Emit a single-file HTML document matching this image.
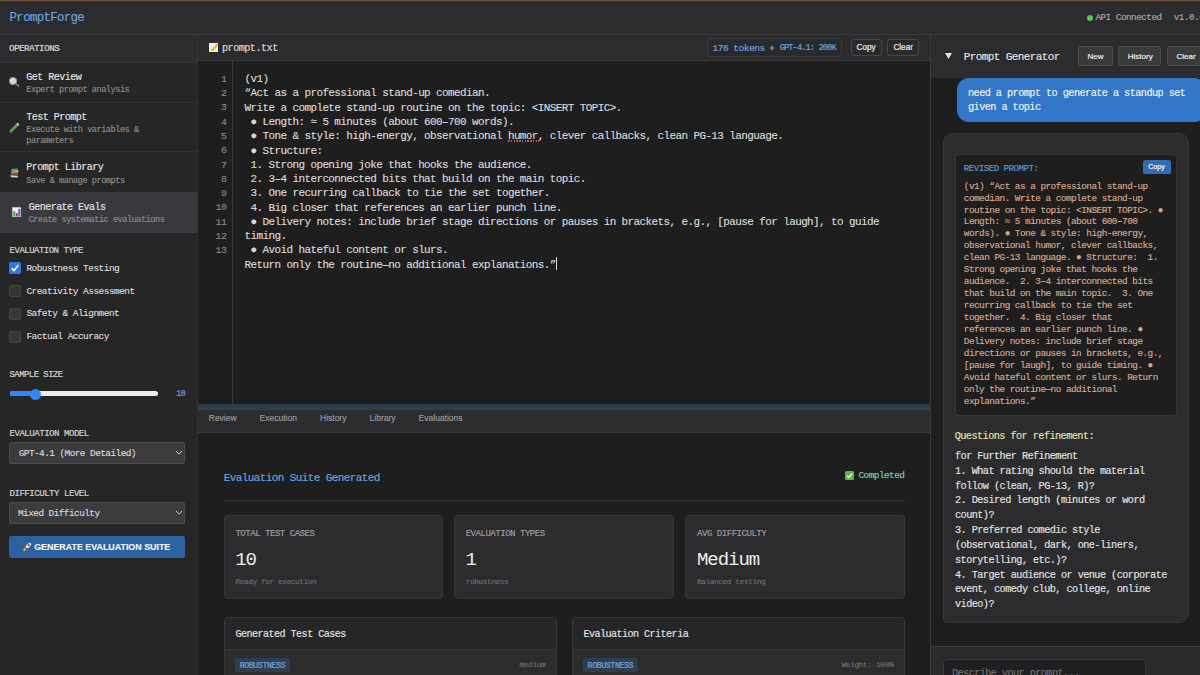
<!DOCTYPE html>
<html><head><meta charset="utf-8">
<style>
*{margin:0;padding:0;box-sizing:border-box}
html,body{width:1200px;height:675px;overflow:hidden;background:#1e1e1e;font-family:"Liberation Mono",monospace;color:#d4d4d4;position:relative}
.a{position:absolute}
.t{position:absolute;white-space:pre;-webkit-text-stroke-width:0.15px}
.s{font-family:"Liberation Sans",sans-serif}
</style></head><body>
<div class="a" style="left:0px;top:0px;width:1200px;height:34px;background:#2c2c2e;"></div>
<div class="a" style="left:0px;top:34px;width:1200px;height:1px;background:#3a3a3c;"></div>
<div class="a" style="left:0px;top:0px;width:1200px;height:1px;background:#74503c;"></div>
<div class="t" style="left:9.60px;top:11.41px;font-size:12.43px;line-height:14.17px;letter-spacing:-0.678px;color:#6aa5e0;">PromptForge</div>
<div class="a" style="left:1086.5px;top:14.6px;width:6px;height:6px;background:#5cc05c;border-radius:50%;"></div>
<div class="t" style="left:1095.40px;top:13.28px;font-size:9.35px;line-height:10.66px;letter-spacing:-0.510px;color:#a8a8a8;">API Connected</div>
<div class="t" style="left:1173.70px;top:13.28px;font-size:9.35px;line-height:10.66px;letter-spacing:-0.510px;color:#a8a8a8;">v1.0.0</div>
<div class="a" style="left:0px;top:35px;width:197px;height:640px;background:#262626;"></div>
<div class="a" style="left:197px;top:35px;width:1px;height:640px;background:#333335;"></div>
<div class="a" style="left:0px;top:35px;width:197px;height:27px;background:#2c2c2e;"></div>
<div class="a" style="left:0px;top:62px;width:197px;height:1px;background:#38383a;"></div>
<div class="t" style="left:8.90px;top:44.28px;font-size:9.24px;line-height:10.53px;letter-spacing:-0.504px;color:#d8d8d8;-webkit-text-stroke-width:0.22px">OPERATIONS</div>
<div class="a" style="left:0px;top:102px;width:197px;height:1px;background:#303032;"></div>
<div class="a" style="left:0px;top:151px;width:197px;height:1px;background:#303032;"></div>
<div class="a" style="left:0px;top:192px;width:197px;height:41px;background:#39393e;"></div>
<div class="t" style="left:26.30px;top:71.89px;font-size:10.07px;line-height:11.47px;letter-spacing:-0.549px;color:#e4e4e4;">Get Review</div>
<div class="t" style="left:26.30px;top:86.43px;font-size:8.58px;line-height:9.78px;letter-spacing:-0.468px;color:#8c8c8c;">Expert prompt analysis</div>
<div class="t" style="left:26.30px;top:111.59px;font-size:10.07px;line-height:11.47px;letter-spacing:-0.549px;color:#e4e4e4;">Test Prompt</div>
<div class="t" style="left:26.30px;top:125.37px;font-size:8.58px;line-height:10.7px;letter-spacing:-0.468px;color:#8c8c8c;">Execute with variables &amp;
parameters</div>
<div class="t" style="left:26.30px;top:162.29px;font-size:10.07px;line-height:11.47px;letter-spacing:-0.549px;color:#e4e4e4;">Prompt Library</div>
<div class="t" style="left:26.30px;top:176.63px;font-size:8.58px;line-height:9.78px;letter-spacing:-0.468px;color:#8c8c8c;">Save &amp; manage prompts</div>
<div class="t" style="left:28.70px;top:201.69px;font-size:10.07px;line-height:11.47px;letter-spacing:-0.549px;color:#e4e4e4;">Generate Evals</div>
<div class="t" style="left:28.70px;top:216.03px;font-size:8.58px;line-height:9.78px;letter-spacing:-0.468px;color:#8c8c8c;">Create systematic evaluations</div>
<svg class="a" style="left:8px;top:76px" width="13" height="12" viewBox="0 0 13 12"><circle cx="5" cy="5" r="3.6" fill="#d8d8d8" stroke="#9a9a9a" stroke-width="1"/><line x1="7.5" y1="7.5" x2="11" y2="10.5" stroke="#8a8a8a" stroke-width="1.6"/></svg>
<svg class="a" style="left:9px;top:122px" width="11" height="11" viewBox="0 0 11 11"><line x1="1.8" y1="9.3" x2="8" y2="3" stroke="#4caf3c" stroke-width="2.8" stroke-linecap="round"/><line x1="8" y1="3" x2="9.6" y2="1.4" stroke="#b8b8b8" stroke-width="2.8"/></svg>
<svg class="a" style="left:9.5px;top:167.5px" width="9" height="10" viewBox="0 0 9 10"><path d="M0.5 7 L7.5 7.5 L8 9.5 L1 9.2Z" fill="#d8d8e8"/><path d="M0.3 6.8 L7.8 7.4" stroke="#3a5fc0" stroke-width="1"/><path d="M1 4 L8 4.8 L8 7.2 L1 6.5Z" fill="#c03a30"/><path d="M1.5 1 L7.5 0.5 L8.5 3 L1.5 3.8Z" fill="#52b048"/><path d="M1.5 3.8 L8.5 3 L8.5 4.2 L1.5 4.6Z" fill="#e8e8e8"/></svg>
<svg class="a" style="left:11.7px;top:206.6px" width="9.2" height="10.6" viewBox="0 0 9.2 10.6"><rect x="0" y="0" width="9.2" height="10.6" fill="#f0f0f0"/><rect x="0.3" y="0.3" width="8.6" height="10" fill="none" stroke="#9a9a9a" stroke-width=".6"/><rect x="1.2" y="4" width="2" height="5.6" fill="#4cb048"/><rect x="3.7" y="6" width="2" height="3.6" fill="#d03030"/><rect x="6.2" y="2" width="2" height="7.6" fill="#3a70d8"/></svg>
<div class="t" style="left:9.60px;top:245.90px;font-size:8.98px;line-height:10.23px;letter-spacing:-0.490px;color:#d0d0d0;-webkit-text-stroke-width:0.22px">EVALUATION TYPE</div>
<div class="a" style="left:9px;top:262.2px;width:11.7px;height:11.7px;background:#2f7ae0;border-radius:2px;"></div>
<svg class="a" style="left:9px;top:262.2px" width="12" height="12" viewBox="0 0 12 12"><path d="M2.8 6.2 L5 8.5 L9.3 3.3" fill="none" stroke="#fff" stroke-width="1.6"/></svg>
<div class="t" style="left:26.40px;top:263.99px;font-size:9.46px;line-height:10.78px;letter-spacing:-0.516px;color:#dcdcdc;">Robustness Testing</div>
<div class="a" style="left:9px;top:285.1px;width:11.7px;height:11.7px;background:#37373a;border:1px solid #444446;border-radius:2px;"></div>
<div class="t" style="left:26.40px;top:286.79px;font-size:9.46px;line-height:10.78px;letter-spacing:-0.516px;color:#dcdcdc;">Creativity Assessment</div>
<div class="a" style="left:9px;top:308px;width:11.7px;height:11.7px;background:#37373a;border:1px solid #444446;border-radius:2px;"></div>
<div class="t" style="left:26.40px;top:309.39px;font-size:9.46px;line-height:10.78px;letter-spacing:-0.516px;color:#dcdcdc;">Safety &amp; Alignment</div>
<div class="a" style="left:9px;top:331px;width:11.7px;height:11.7px;background:#37373a;border:1px solid #444446;border-radius:2px;"></div>
<div class="t" style="left:26.40px;top:331.59px;font-size:9.46px;line-height:10.78px;letter-spacing:-0.516px;color:#dcdcdc;">Factual Accuracy</div>
<div class="t" style="left:9.50px;top:369.99px;font-size:8.87px;line-height:10.11px;letter-spacing:-0.484px;color:#d0d0d0;-webkit-text-stroke-width:0.22px">SAMPLE SIZE</div>
<div class="a" style="left:9.5px;top:390.8px;width:148.5px;height:5.5px;background:#ececec;border-radius:3px;"></div>
<div class="a" style="left:9.5px;top:390.8px;width:26px;height:5.5px;background:#3b82f6;border-radius:3px;"></div>
<div class="a" style="left:30px;top:388.5px;width:11px;height:11px;background:#3b82f6;border-radius:50%;"></div>
<div class="t" style="left:176.20px;top:389.71px;font-size:8.36px;line-height:9.53px;letter-spacing:-0.456px;color:#6aa5e0;">10</div>
<div class="t" style="left:9.50px;top:428.91px;font-size:9.08px;line-height:10.35px;letter-spacing:-0.495px;color:#d0d0d0;-webkit-text-stroke-width:0.22px">EVALUATION MODEL</div>
<div class="a" style="left:9.2px;top:442px;width:176.3px;height:22.2px;background:#3c3c3e;border:1px solid #4c4c4e;border-radius:2px;"></div>
<div class="t" style="left:18.70px;top:448.88px;font-size:9.35px;line-height:10.66px;letter-spacing:-0.510px;color:#dcdcdc;">GPT-4.1 (More Detailed)</div>
<svg class="a" style="left:174.8px;top:450.2px" width="8" height="6" viewBox="0 0 8 6"><path d="M1 1 L4 4.2 L7 1" fill="none" stroke="#c8c8c8" stroke-width="1"/></svg>
<div class="t" style="left:9.50px;top:488.91px;font-size:9.08px;line-height:10.35px;letter-spacing:-0.495px;color:#d0d0d0;-webkit-text-stroke-width:0.22px">DIFFICULTY LEVEL</div>
<div class="a" style="left:9.2px;top:502px;width:176.3px;height:22.2px;background:#3c3c3e;border:1px solid #4c4c4e;border-radius:2px;"></div>
<div class="t" style="left:18.00px;top:509.48px;font-size:9.35px;line-height:10.66px;letter-spacing:-0.510px;color:#dcdcdc;">Mixed Difficulty</div>
<svg class="a" style="left:174.8px;top:509.7px" width="8" height="6" viewBox="0 0 8 6"><path d="M1 1 L4 4.2 L7 1" fill="none" stroke="#c8c8c8" stroke-width="1"/></svg>
<div class="a" style="left:9.2px;top:535.9px;width:176.1px;height:22px;background:#2d62a2;border-radius:2px;"></div>
<svg class="a" style="left:22px;top:542px" width="10" height="10" viewBox="0 0 10 10"><ellipse cx="6.3" cy="3.7" rx="3.6" ry="1.7" transform="rotate(-45 6.3 3.7)" fill="#dfe8f5"/><circle cx="6.8" cy="3.2" r="0.9" fill="#7a1a1a"/><ellipse cx="2.8" cy="5" rx="1.3" ry="1.1" fill="#d84a2a"/><ellipse cx="5" cy="7.3" rx="1.1" ry="1.4" fill="#d83028"/><ellipse cx="2.5" cy="7.7" rx="1.1" ry="1.3" fill="#e8d050"/></svg>
<div class="t s" style="left:34.20px;top:541.67px;font-size:8.9px;line-height:10.68px;color:#f2f2f2;font-weight:bold;">GENERATE EVALUATION SUITE</div>
<div class="a" style="left:198px;top:35px;width:732px;height:25px;background:#2c2c2e;"></div>
<div class="a" style="left:198px;top:60px;width:732px;height:1px;background:#3a3a3c;"></div>
<svg class="a" style="left:209.3px;top:42.8px" width="9" height="9.3" viewBox="0 0 9 9.3"><rect x="0" y="0" width="9" height="9.3" fill="#eeeeee"/><path d="M2.5 7.8 L7.8 2.5" stroke="#e8b828" stroke-width="2.2"/><path d="M7.2 1.2 L8.6 2.6" stroke="#e07070" stroke-width="1.2"/></svg>
<div class="t" style="left:222.00px;top:43.05px;font-size:10.23px;line-height:11.66px;letter-spacing:-0.558px;color:#dcdcdc;">prompt.txt</div>
<div class="a" style="left:706.7px;top:38.2px;width:135px;height:18.5px;background:#2a2a2c;border:1px solid #3c3c3e;border-radius:4px;"></div>
<div class="t" style="left:712.50px;top:43.90px;font-size:9.57px;line-height:10.91px;letter-spacing:-0.522px;color:#6aa5e0;">176 tokens</div>
<div class="a" style="left:770px;top:45.6px;width:4px;height:4px;background:#7a7a7a;border-radius:50%;"></div>
<div class="t" style="left:779.70px;top:43.26px;font-size:8.78px;line-height:10.01px;letter-spacing:-0.950px;color:#6aa5e0;">GPT-4.1: 200K</div>
<div class="a" style="left:850.5px;top:39px;width:31px;height:16.6px;background:#2a2a2c;border:1px solid #48484a;border-radius:3px;"></div>
<div class="t s" style="left:856.60px;top:42.74px;font-size:8.2px;line-height:9.84px;color:#e8e8e8;-webkit-text-stroke-width:0.2px">Copy</div>
<div class="a" style="left:887.4px;top:39px;width:31.4px;height:16.6px;background:#2a2a2c;border:1px solid #48484a;border-radius:3px;"></div>
<div class="t s" style="left:893.40px;top:42.74px;font-size:8.2px;line-height:9.84px;color:#e8e8e8;-webkit-text-stroke-width:0.2px">Clear</div>
<div class="a" style="left:232px;top:61px;width:1px;height:343px;background:#38383a;"></div>
<div class="t" style="left:205.80px;width:20.54px;text-align:right;top:73.82px;font-size:9.90px;line-height:11.29px;letter-spacing:-0.540px;color:#888888;">1</div>
<div class="t" style="left:205.80px;width:20.54px;text-align:right;top:88.10px;font-size:9.90px;line-height:11.29px;letter-spacing:-0.540px;color:#888888;">2</div>
<div class="t" style="left:205.80px;width:20.54px;text-align:right;top:102.38px;font-size:9.90px;line-height:11.29px;letter-spacing:-0.540px;color:#888888;">3</div>
<div class="t" style="left:205.80px;width:20.54px;text-align:right;top:116.66px;font-size:9.90px;line-height:11.29px;letter-spacing:-0.540px;color:#888888;">4</div>
<div class="t" style="left:205.80px;width:20.54px;text-align:right;top:130.94px;font-size:9.90px;line-height:11.29px;letter-spacing:-0.540px;color:#888888;">5</div>
<div class="t" style="left:205.80px;width:20.54px;text-align:right;top:145.22px;font-size:9.90px;line-height:11.29px;letter-spacing:-0.540px;color:#888888;">6</div>
<div class="t" style="left:205.80px;width:20.54px;text-align:right;top:159.50px;font-size:9.90px;line-height:11.29px;letter-spacing:-0.540px;color:#888888;">7</div>
<div class="t" style="left:205.80px;width:20.54px;text-align:right;top:173.78px;font-size:9.90px;line-height:11.29px;letter-spacing:-0.540px;color:#888888;">8</div>
<div class="t" style="left:205.80px;width:20.54px;text-align:right;top:188.06px;font-size:9.90px;line-height:11.29px;letter-spacing:-0.540px;color:#888888;">9</div>
<div class="t" style="left:205.80px;width:20.54px;text-align:right;top:202.34px;font-size:9.90px;line-height:11.29px;letter-spacing:-0.540px;color:#888888;">10</div>
<div class="t" style="left:205.80px;width:20.54px;text-align:right;top:216.62px;font-size:9.90px;line-height:11.29px;letter-spacing:-0.540px;color:#888888;">11</div>
<div class="t" style="left:205.80px;width:20.54px;text-align:right;top:230.90px;font-size:9.90px;line-height:11.29px;letter-spacing:-0.540px;color:#888888;">12</div>
<div class="t" style="left:205.80px;width:20.54px;text-align:right;top:245.18px;font-size:9.90px;line-height:11.29px;letter-spacing:-0.540px;color:#888888;">13</div>
<div class="t" style="left:244.60px;top:73.13px;font-size:10.97px;line-height:12.5px;letter-spacing:-0.598px;color:#dadada;">(v1)</div>
<div class="t" style="left:244.60px;top:87.41px;font-size:10.97px;line-height:12.5px;letter-spacing:-0.598px;color:#dadada;">“Act as a professional stand-up comedian.</div>
<div class="t" style="left:244.60px;top:101.69px;font-size:10.97px;line-height:12.5px;letter-spacing:-0.598px;color:#dadada;">Write a complete stand-up routine on the topic: &lt;INSERT TOPIC&gt;.</div>
<div class="t" style="left:244.60px;top:115.97px;font-size:10.97px;line-height:12.5px;letter-spacing:-0.598px;color:#dadada;"> ● Length: ≈ 5 minutes (about 600–700 words).</div>
<div class="t" style="left:244.60px;top:130.25px;font-size:10.97px;line-height:12.5px;letter-spacing:-0.598px;color:#dadada;"> ● Tone &amp; style: high-energy, observational humor, clever callbacks, clean PG-13 language.</div>
<div class="t" style="left:244.60px;top:144.53px;font-size:10.97px;line-height:12.5px;letter-spacing:-0.598px;color:#dadada;"> ● Structure:</div>
<div class="t" style="left:244.60px;top:158.81px;font-size:10.97px;line-height:12.5px;letter-spacing:-0.598px;color:#dadada;"> 1. Strong opening joke that hooks the audience.</div>
<div class="t" style="left:244.60px;top:173.09px;font-size:10.97px;line-height:12.5px;letter-spacing:-0.598px;color:#dadada;"> 2. 3–4 interconnected bits that build on the main topic.</div>
<div class="t" style="left:244.60px;top:187.37px;font-size:10.97px;line-height:12.5px;letter-spacing:-0.598px;color:#dadada;"> 3. One recurring callback to tie the set together.</div>
<div class="t" style="left:244.60px;top:201.65px;font-size:10.97px;line-height:12.5px;letter-spacing:-0.598px;color:#dadada;"> 4. Big closer that references an earlier punch line.</div>
<div class="t" style="left:244.60px;top:215.93px;font-size:10.97px;line-height:12.5px;letter-spacing:-0.598px;color:#dadada;"> ● Delivery notes: include brief stage directions or pauses in brackets, e.g., [pause for laugh], to guide</div>
<div class="t" style="left:244.60px;top:230.21px;font-size:10.97px;line-height:12.5px;letter-spacing:-0.598px;color:#dadada;">timing.</div>
<div class="t" style="left:244.60px;top:244.49px;font-size:10.97px;line-height:12.5px;letter-spacing:-0.598px;color:#dadada;"> ● Avoid hateful content or slurs.</div>
<div class="t" style="left:244.60px;top:258.77px;font-size:10.97px;line-height:12.5px;letter-spacing:-0.598px;color:#dadada;">Return only the routine—no additional explanations.”</div>
<div class="a" style="left:556px;top:257px;width:1px;height:13px;background:#d8d8d8;"></div>
<div class="a" style="left:508px;top:140.4px;width:30.5px;height:1.5px;background:repeating-linear-gradient(90deg,#c05048 0 1.5px,transparent 1.5px 2.77px);"></div>
<div class="a" style="left:198px;top:404px;width:732px;height:2px;background:#253a55;"></div>
<div class="a" style="left:198px;top:406px;width:732px;height:4px;background:#2e3e4f;"></div>
<div class="a" style="left:198px;top:410px;width:732px;height:22px;background:#2d2d2f;"></div>
<div class="a" style="left:198px;top:432px;width:732px;height:1px;background:#38383a;"></div>
<div class="t s" style="left:208.75px;top:413.45px;font-size:8.5px;line-height:10.2px;color:#9c9c9c;">Review</div>
<div class="t s" style="left:259.60px;top:413.45px;font-size:8.5px;line-height:10.2px;color:#9c9c9c;">Execution</div>
<div class="t s" style="left:320.00px;top:413.45px;font-size:8.5px;line-height:10.2px;color:#9c9c9c;">History</div>
<div class="t s" style="left:369.60px;top:413.45px;font-size:8.5px;line-height:10.2px;color:#9c9c9c;">Library</div>
<div class="t s" style="left:418.60px;top:413.45px;font-size:8.5px;line-height:10.2px;color:#9c9c9c;">Evaluations</div>
<div class="t" style="left:223.70px;top:472.10px;font-size:11.00px;line-height:12.54px;letter-spacing:-0.600px;color:#6aa5e0;">Evaluation Suite Generated</div>
<svg class="a" style="left:845px;top:470.5px" width="9" height="9" viewBox="0 0 9 9"><rect width="9" height="9" rx="1.5" fill="#5cb84a"/><path d="M2 4.6 L3.8 6.4 L7 2.6" fill="none" stroke="#fff" stroke-width="1.3"/></svg>
<div class="t" style="left:858.50px;top:470.68px;font-size:9.35px;line-height:10.66px;letter-spacing:-0.510px;color:#7fcfb0;">Completed</div>
<div class="a" style="left:223.7px;top:500px;width:681px;height:1px;background:#38383a;"></div>
<div class="a" style="left:223.75px;top:515px;width:219.25px;height:84px;background:#2c2c2e;border:1px solid #38383a;border-radius:4px;"></div>
<div class="t" style="left:235.45px;top:528.67px;font-size:9.06px;line-height:10.33px;letter-spacing:-0.494px;color:#a0a0a0;">TOTAL TEST CASES</div>
<div class="t" style="left:235.25px;top:549.79px;font-size:19.03px;line-height:21.69px;letter-spacing:-1.038px;color:#ececec;-webkit-text-stroke-width:0">10</div>
<div class="t" style="left:235.45px;top:577.67px;font-size:7.81px;line-height:8.9px;letter-spacing:-0.426px;color:#707070;">Ready for execution</div>
<div class="a" style="left:454px;top:515px;width:219.75px;height:84px;background:#2c2c2e;border:1px solid #38383a;border-radius:4px;"></div>
<div class="t" style="left:465.70px;top:528.67px;font-size:9.06px;line-height:10.33px;letter-spacing:-0.494px;color:#a0a0a0;">EVALUATION TYPES</div>
<div class="t" style="left:465.50px;top:549.79px;font-size:19.03px;line-height:21.69px;letter-spacing:-1.038px;color:#ececec;-webkit-text-stroke-width:0">1</div>
<div class="t" style="left:465.70px;top:577.67px;font-size:7.81px;line-height:8.9px;letter-spacing:-0.426px;color:#707070;">robustness</div>
<div class="a" style="left:685.4px;top:515px;width:219.3px;height:84px;background:#2c2c2e;border:1px solid #38383a;border-radius:4px;"></div>
<div class="t" style="left:697.10px;top:528.67px;font-size:9.06px;line-height:10.33px;letter-spacing:-0.494px;color:#a0a0a0;">AVG DIFFICULTY</div>
<div class="t" style="left:696.90px;top:549.79px;font-size:19.03px;line-height:21.69px;letter-spacing:-1.038px;color:#ececec;-webkit-text-stroke-width:0">Medium</div>
<div class="t" style="left:697.10px;top:577.67px;font-size:7.81px;line-height:8.9px;letter-spacing:-0.426px;color:#707070;">Balanced testing</div>
<div class="a" style="left:223.75px;top:616.5px;width:333px;height:80px;background:#2c2c2e;border:1px solid #38383a;border-radius:4px;"></div>
<div class="a" style="left:224.75px;top:617.5px;width:331px;height:31.2px;background:#262628;border-radius:3px 3px 0 0;"></div>
<div class="a" style="left:224.75px;top:648.7px;width:331px;height:1px;background:#38383a;"></div>
<div class="t" style="left:235.45px;top:629.04px;font-size:10.12px;line-height:11.54px;letter-spacing:-0.552px;color:#e4e4e4;">Generated Test Cases</div>
<div class="a" style="left:235.45px;top:658.3px;width:54.2px;height:13.7px;background:#2f3f52;border-radius:2px;"></div>
<div class="t" style="left:239.65px;top:661.81px;font-size:8.36px;line-height:9.53px;letter-spacing:-0.456px;color:#79a6d6;">ROBUSTNESS</div>
<div class="t" style="left:464.95px;width:80.43px;text-align:right;top:660.38px;font-size:7.92px;line-height:9.03px;letter-spacing:-0.432px;color:#707070;">medium</div>
<div class="a" style="left:571.7px;top:616.5px;width:333px;height:80px;background:#2c2c2e;border:1px solid #38383a;border-radius:4px;"></div>
<div class="a" style="left:572.7px;top:617.5px;width:331px;height:31.2px;background:#262628;border-radius:3px 3px 0 0;"></div>
<div class="a" style="left:572.7px;top:648.7px;width:331px;height:1px;background:#38383a;"></div>
<div class="t" style="left:583.40px;top:629.04px;font-size:10.12px;line-height:11.54px;letter-spacing:-0.552px;color:#e4e4e4;">Evaluation Criteria</div>
<div class="a" style="left:583.4000000000001px;top:658.3px;width:54.2px;height:13.7px;background:#2f3f52;border-radius:2px;"></div>
<div class="t" style="left:587.60px;top:661.81px;font-size:8.36px;line-height:9.53px;letter-spacing:-0.456px;color:#79a6d6;">ROBUSTNESS</div>
<div class="t" style="left:812.90px;width:80.43px;text-align:right;top:660.38px;font-size:7.92px;line-height:9.03px;letter-spacing:-0.432px;color:#707070;">Weight: 100%</div>
<div class="a" style="left:930px;top:35px;width:1px;height:640px;background:#3a3a3c;"></div>
<div class="a" style="left:931px;top:35px;width:269px;height:42.5px;background:#2c2c2e;"></div>
<div class="a" style="left:931px;top:77.5px;width:269px;height:569px;background:#1e1e1e;"></div>
<svg class="a" style="left:945px;top:53px" width="7" height="6" viewBox="0 0 7 6"><path d="M0 0 L7 0 L3.5 6 Z" fill="#e0e0e0"/></svg>
<div class="t" style="left:963.80px;top:51.00px;font-size:11.00px;line-height:12.54px;letter-spacing:-0.600px;color:#e4e4e4;">Prompt Generator</div>
<div class="a" style="left:1078px;top:46.1px;width:34.6px;height:19.6px;background:#3a3a3c;border:1px solid #4a4a4c;border-radius:3px;"></div>
<div class="t s" style="left:1087.50px;top:51.73px;font-size:8px;line-height:9.6px;color:#ececec;-webkit-text-stroke-width:0.2px">New</div>
<div class="a" style="left:1118.2px;top:46.1px;width:43.1px;height:19.6px;background:#3a3a3c;border:1px solid #4a4a4c;border-radius:3px;"></div>
<div class="t s" style="left:1127.80px;top:51.73px;font-size:8px;line-height:9.6px;color:#ececec;-webkit-text-stroke-width:0.2px">History</div>
<div class="a" style="left:1167.2px;top:46.1px;width:40px;height:19.6px;background:#3a3a3c;border:1px solid #4a4a4c;border-radius:3px;"></div>
<div class="t s" style="left:1176.50px;top:51.73px;font-size:8px;line-height:9.6px;color:#ececec;-webkit-text-stroke-width:0.2px">Clear</div>
<div class="a" style="left:957px;top:77.8px;width:249px;height:44.1px;background:#3277c8;border-radius:12px;"></div>
<div class="t" style="left:968.00px;top:85.53px;font-size:10.23px;line-height:14.1px;letter-spacing:-0.558px;color:#f4f4f4;">need a prompt to generate a standup set
given a topic</div>
<div class="a" style="left:942.8px;top:133px;width:246.6px;height:490.2px;background:#2c2c2e;border:1px solid #38383a;border-radius:10px 10px 10px 3px;"></div>
<div class="a" style="left:955.1px;top:153.8px;width:222.3px;height:262.7px;background:#1e1e1e;border:1px solid #363638;border-radius:4px;"></div>
<div class="t" style="left:963.80px;top:163.77px;font-size:9.13px;line-height:10.41px;letter-spacing:-0.498px;color:#5b9bd5;">REVISED PROMPT:</div>
<div class="a" style="left:1143.3px;top:160.2px;width:28px;height:13.8px;background:#2f6db5;border-radius:2px;"></div>
<div class="t s" style="left:1148.30px;top:162.87px;font-size:7px;line-height:8.4px;color:#ffffff;">Copy</div>
<div class="t" style="left:963.80px;top:180.63px;font-size:9.37px;line-height:11.96px;letter-spacing:-0.511px;color:#d9a888;">(v1) “Act as a professional stand-up
comedian. Write a complete stand-up
routine on the topic: &lt;INSERT TOPIC&gt;. ●
Length: ≈ 5 minutes (about 600–700
words). ● Tone &amp; style: high-energy,
observational humor, clever callbacks,
clean PG-13 language. ● Structure:  1.
Strong opening joke that hooks the
audience.  2. 3–4 interconnected bits
that build on the main topic.  3. One
recurring callback to tie the set
together.  4. Big closer that
references an earlier punch line. ●
Delivery notes: include brief stage
directions or pauses in brackets, e.g.,
[pause for laugh], to guide timing. ●
Avoid hateful content or slurs. Return
only the routine—no additional
explanations.”</div>
<div class="t" style="left:954.70px;top:430.75px;font-size:10.23px;line-height:11.66px;letter-spacing:-0.558px;color:#e6e4a8;">Questions for refinement:</div>
<div class="t" style="left:955.00px;top:448.85px;font-size:10.23px;line-height:14.85px;letter-spacing:-0.558px;color:#e2e2e2;">for Further Refinement
1. What rating should the material
follow (clean, PG-13, R)?
2. Desired length (minutes or word
count)?
3. Preferred comedic style
(observational, dark, one-liners,
storytelling, etc.)?
4. Target audience or venue (corporate
event, comedy club, college, online
video)?</div>
<div class="a" style="left:931px;top:646px;width:269px;height:1px;background:#3a3a3c;"></div>
<div class="a" style="left:931px;top:647px;width:269px;height:28px;background:#2b2b2d;"></div>
<div class="a" style="left:942.9px;top:658.5px;width:202.7px;height:30px;background:#1f1f21;border:1px solid #3a3a3c;border-radius:4px;"></div>
<div class="t" style="left:952.00px;top:667.69px;font-size:10.18px;line-height:11.6px;letter-spacing:-0.555px;color:#707070;">Describe your prompt...</div>
</body></html>
